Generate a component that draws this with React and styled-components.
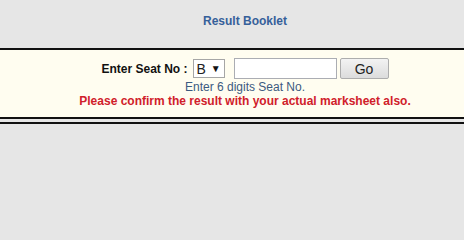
import React from "react";
import styled, { createGlobalStyle } from "styled-components";

const Global = createGlobalStyle`
  html, body { margin: 0; padding: 0; }
  body {
    background: #e6e6e6;
    font-family: "Liberation Sans", Arial, sans-serif;
    font-size: 12px;
    overflow: hidden;
  }
`;

const Header = styled.div`
  height: 48px;
  display: flex;
  align-items: center;
  justify-content: center;
  padding-left: 26px;
  padding-bottom: 6px;
  box-sizing: border-box;
`;

const Title = styled.div`
  color: #36609a;
  font-weight: bold;
  font-size: 12px;
`;

const Panel = styled.div`
  background: #fffdf0;
  border-top: 2px solid #111;
  border-bottom: 2px solid #111;
  padding: 8px 0 9px 26px;
  display: flex;
  flex-direction: column;
  align-items: center;
`;

const Row = styled.div`
  display: flex;
  align-items: center;
  height: 21px;
`;

const Label = styled.span`
  font-weight: bold;
  color: #111;
  margin-right: 5px;
`;

const SelectBox = styled.div`
  width: 32px;
  height: 19px;
  box-sizing: border-box;
  border: 1px solid #a6a6a6;
  background: #fff;
  display: flex;
  align-items: center;
  padding-left: 3px;
  font-size: 14px;
  color: #222;
  margin-right: 9px;
`;

const Arrow = styled.span`
  font-size: 10px;
  margin-left: 5px;
  color: #111;
`;

const TextInput = styled.input`
  width: 103px;
  height: 21px;
  box-sizing: border-box;
  border: 1px solid #abadb3;
  background: #fff;
  margin: 0 3px 0 0;
  padding: 0 3px;
  font-family: inherit;
`;

const Button = styled.button`
  width: 49px;
  height: 21px;
  box-sizing: border-box;
  border: 1px solid #adadad;
  border-radius: 2px;
  background: linear-gradient(#f3f3f3, #dcdcdc);
  font-family: "Liberation Sans", Arial, sans-serif;
  font-size: 14px;
  color: #222;
  padding: 0;
`;

const Hint = styled.div`
  color: #3c5a80;
  line-height: 14px;
  margin-top: 1px;
`;

const Warning = styled.div`
  color: #d0202a;
  font-weight: bold;
  line-height: 14px;
`;

const Gap = styled.div`
  height: 3px;
`;

const Rule = styled.div`
  height: 2px;
  background: #111;
`;

export default function App() {
  return (
    <>
      <Global />
      <Header>
        <Title>Result Booklet</Title>
      </Header>
      <Panel>
        <Row>
          <Label>Enter Seat No :</Label>
          <SelectBox>
            B<Arrow>▼</Arrow>
          </SelectBox>
          <TextInput type="text" />
          <Button>Go</Button>
        </Row>
        <Hint>Enter 6 digits Seat No.</Hint>
        <Warning>Please confirm the result with your actual marksheet also.</Warning>
      </Panel>
      <Gap />
      <Rule />
    </>
  );
}
